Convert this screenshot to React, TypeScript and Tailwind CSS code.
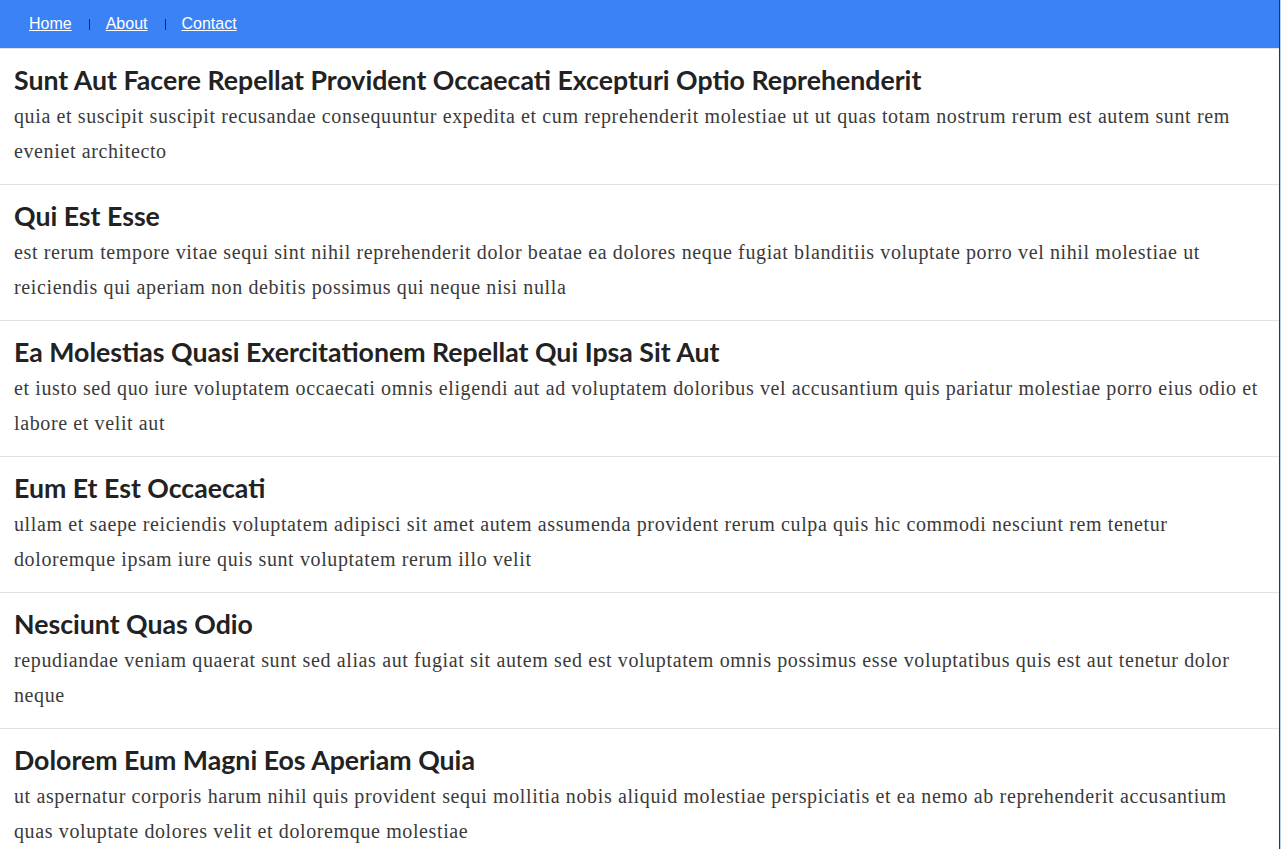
const posts = [
  {
    title: "Sunt Aut Facere Repellat Provident Occaecati Excepturi Optio Reprehenderit",
    body: "quia et suscipit suscipit recusandae consequuntur expedita et cum reprehenderit molestiae ut ut quas totam nostrum rerum est autem sunt rem eveniet architecto",
  },
  {
    title: "Qui Est Esse",
    body: "est rerum tempore vitae sequi sint nihil reprehenderit dolor beatae ea dolores neque fugiat blanditiis voluptate porro vel nihil molestiae ut reiciendis qui aperiam non debitis possimus qui neque nisi nulla",
  },
  {
    title: "Ea Molestias Quasi Exercitationem Repellat Qui Ipsa Sit Aut",
    body: "et iusto sed quo iure voluptatem occaecati omnis eligendi aut ad voluptatem doloribus vel accusantium quis pariatur molestiae porro eius odio et labore et velit aut",
  },
  {
    title: "Eum Et Est Occaecati",
    body: "ullam et saepe reiciendis voluptatem adipisci sit amet autem assumenda provident rerum culpa quis hic commodi nesciunt rem tenetur doloremque ipsam iure quis sunt voluptatem rerum illo velit",
  },
  {
    title: "Nesciunt Quas Odio",
    body: "repudiandae veniam quaerat sunt sed alias aut fugiat sit autem sed est voluptatem omnis possimus esse voluptatibus quis est aut tenetur dolor neque",
  },
  {
    title: "Dolorem Eum Magni Eos Aperiam Quia",
    body: "ut aspernatur corporis harum nihil quis provident sequi mollitia nobis aliquid molestiae perspiciatis et ea nemo ab reprehenderit accusantium quas voluptate dolores velit et doloremque molestiae",
  },
];

const links = ["Home", "About", "Contact"];

export default function App() {
  return (
    <div className="flex h-[849px] w-[1281px] overflow-hidden bg-white">
      <div className="w-[1279px] shrink-0">
        <nav className="flex h-[48px] items-center bg-[#3b82f6] pl-[29px] font-['Liberation_Sans',Arial,sans-serif] text-[16px] text-white">
          {links.map((link, i) => (
            <div key={link} className="flex items-center">
              {i > 0 && <span className="mr-[16px] ml-[17px] h-[11px] w-px bg-[#2a2a2a]" />}
              <a href="#" className="underline">
                {link}
              </a>
            </div>
          ))}
        </nav>

        <main>
          {posts.map((post) => (
            <article key={post.title} className="border-t border-[#e2e2e2] px-[14px] pt-[13px] pb-[15px]">
              <h2 className="font-['Lato',sans-serif] text-[26.7px] leading-[37px] font-bold text-[#222]">
                {post.title}
              </h2>
              <p className="font-['Liberation_Serif',serif] text-[20px] leading-[35px] tracking-[0.62px] text-[#3a3a3a]">
                {post.body}
              </p>
            </article>
          ))}
        </main>
      </div>
      <div className="w-[2px] shrink-0 border-l border-[#333] bg-[#b9cfe3]" />
    </div>
  );
}
